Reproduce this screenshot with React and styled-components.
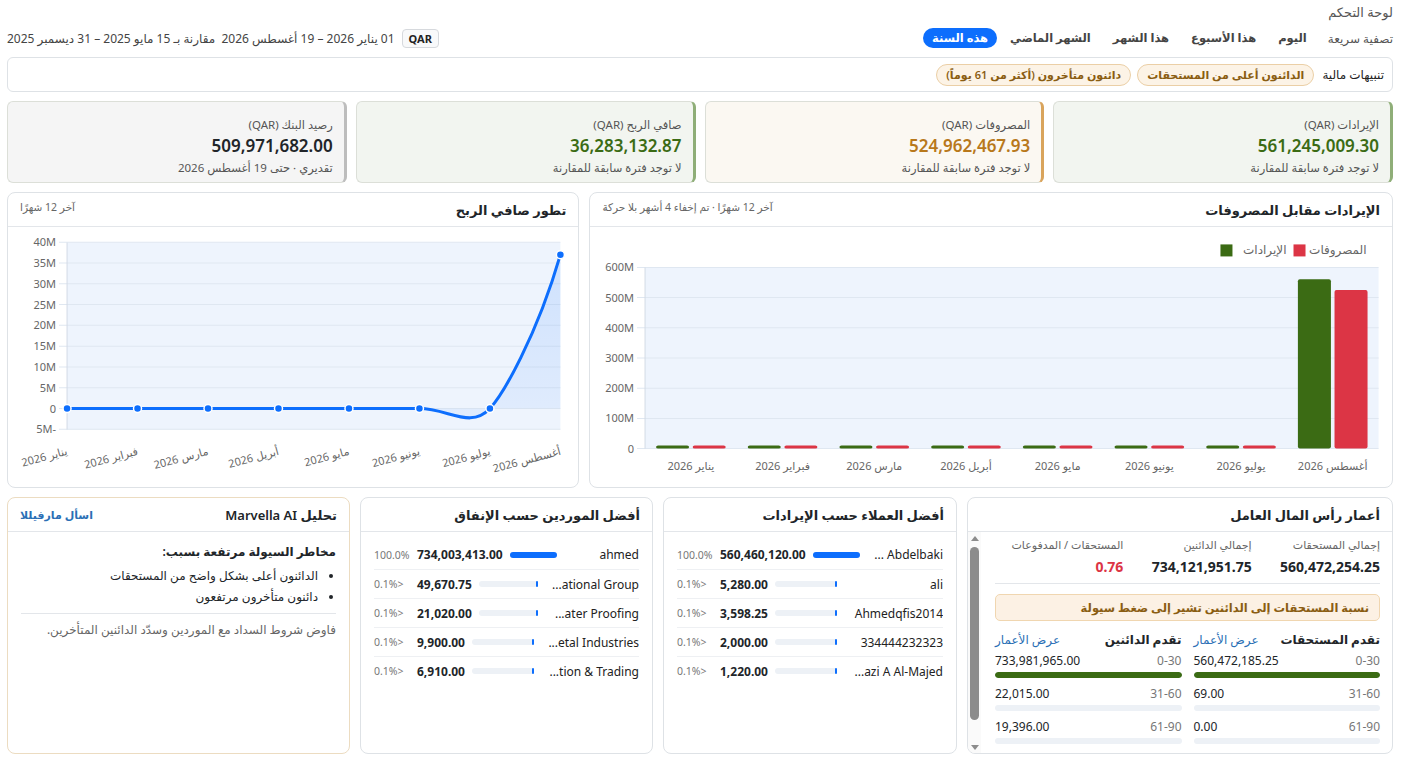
import React from 'react'
import styled, { createGlobalStyle } from 'styled-components'

const GlobalStyle = createGlobalStyle`
  * { box-sizing: border-box; }
  body {
    margin: 0;
    background: #fff;
    color: #212529;
    font-family: 'Noto Sans', 'DejaVu Sans', sans-serif;
  }
`

const Page = styled.div`
  direction: rtl;
  height: 758px;
  overflow: hidden;
  padding: 3px 10px 0 7px;
`

const PageTitle = styled.div`
  font-size: 13px;
  line-height: 18px;
  color: #555;
`

const Toolbar = styled.div`
  margin-top: 5px;
  height: 24px;
  display: flex;
  align-items: center;
  justify-content: space-between;
`

const QuickFilters = styled.div`
  display: flex;
  align-items: center;
  gap: 4px;
`

const FilterLabel = styled.span`
  font-size: 12px;
  color: #555;
  margin-left: 8px;
`

const Tab = styled.span`
  font-size: 11.5px;
  font-weight: 600;
  line-height: 16px;
  padding: 2px 9px;
  border-radius: 11px;
  color: ${p => (p.$active ? '#fff' : '#444')};
  background: ${p => (p.$active ? '#0d6efd' : 'transparent')};
`

const RangeInfo = styled.div`
  display: flex;
  align-items: center;
  gap: 7px;
  font-size: 12px;
  color: #444;
`

const CurrencyBadge = styled.span`
  font-size: 11px;
  font-weight: 700;
  color: #222;
  padding: 1px 6px;
  border: 1px solid #d6d9dd;
  border-radius: 4px;
  background: #f8f9fa;
`

const AlertsBar = styled.div`
  margin-top: 7px;
  height: 35px;
  border: 1px solid #dee2e6;
  border-radius: 6px;
  display: flex;
  align-items: center;
  gap: 6px;
  padding: 0 8px;
`

const AlertsTitle = styled.span`
  font-size: 12px;
  color: #222;
  margin-left: 2px;
`

const AlertPill = styled.span`
  font-size: 11px;
  font-weight: 600;
  line-height: 20px;
  padding: 0 9px;
  border-radius: 11px;
  color: #8a5d12;
  background: #fcf3e6;
  border: 1px solid #ebcfa6;
`

const KpiGrid = styled.div`
  margin-top: 9px;
  display: grid;
  grid-template-columns: repeat(4, 1fr);
  gap: 9px;
`

const Kpi = styled.div`
  height: 82px;
  padding: 14px 11px 0;
  background: ${p => p.$bg};
  border: 1px solid #dcdfd8;
  border-right: 3px solid ${p => p.$accent};
  border-radius: 6px;
`

const KpiLabel = styled.div`
  font-size: 11.5px;
  line-height: 18px;
  color: #555;
`

const KpiValue = styled.div`
  font-size: 17px;
  font-weight: 600;
  line-height: 24px;
  color: ${p => p.$color};
`

const KpiNote = styled.div`
  margin-top: 1px;
  font-size: 11.5px;
  line-height: 18px;
  color: #555;
`

const ChartsGrid = styled.div`
  margin-top: 9px;
  display: grid;
  grid-template-columns: 803fr 572fr;
  gap: 10px;
  height: 296px;
`

const Card = styled.div`
  display: flex;
  flex-direction: column;
  min-width: 0;
  background: #fff;
  border: 1px solid ${p => p.$border || '#dee2e6'};
  border-radius: 8px;
  overflow: hidden;
`

const CardHeader = styled.div`
  height: 34px;
  flex: none;
  display: flex;
  align-items: center;
  justify-content: space-between;
  padding: 0 12px;
  border-bottom: 1px solid #e3e6ea;
`

const CardTitle = styled.span`
  font-size: 13px;
  font-weight: 600;
  color: #212529;
`

const CardHint = styled.span`
  font-size: 10.5px;
  color: #666;
  align-self: flex-start;
  margin-top: 7px;
`

const AskLink = styled.span`
  font-size: 11px;
  font-weight: 600;
  color: #2a6fb5;
`

const ChartBody = styled.div`
  flex: 1;
  min-height: 0;
  svg {
    display: block;
    width: 100%;
    height: 100%;
  }
`

const BottomGrid = styled.div`
  margin-top: 9px;
  display: grid;
  grid-template-columns: 426fr 294fr 293fr 343fr;
  gap: 10px;
  height: 257px;
`

const PanelBody = styled.div`
  flex: 1;
  min-height: 0;
  display: flex;
`

const PanelContent = styled.div`
  flex: 1;
  min-width: 0;
  overflow: hidden;
  padding: 5px 12px 0 14px;
`

const ScrollRail = styled.div`
  width: 13px;
  flex: none;
  display: flex;
  flex-direction: column;
  align-items: center;
  padding: 4px 0 3px;
  background: #fafafa;
`

const RailArrow = styled.div`
  width: 0;
  height: 0;
  border-left: 4px solid transparent;
  border-right: 4px solid transparent;
  ${p => (p.$down ? 'border-top' : 'border-bottom')}: 5px solid #8c8c8c;
  margin-top: ${p => (p.$down ? 'auto' : '0')};
`

const RailThumb = styled.div`
  margin-top: 6px;
  width: 9px;
  height: 173px;
  border-radius: 5px;
  background: #8c8c8c;
`

const Totals = styled.div`
  display: grid;
  grid-template-columns: repeat(3, 1fr);
  padding-bottom: 6px;
  border-bottom: 1px solid #e3e6ea;
`

const TotalLabel = styled.div`
  font-size: 11px;
  line-height: 16px;
  color: #666;
`

const TotalValue = styled.div`
  margin-top: 4px;
  font-size: 14px;
  font-weight: 700;
  line-height: 20px;
  color: ${p => p.$color || '#212529'};
`

const Warning = styled.div`
  margin-top: 10px;
  height: 27px;
  display: flex;
  align-items: center;
  padding: 0 10px;
  font-size: 11.5px;
  font-weight: 600;
  color: #8a5d12;
  background: #fcf1e4;
  border: 1px solid #f0d6b0;
  border-radius: 5px;
`

const AgingGrid = styled.div`
  margin-top: 12px;
  display: grid;
  grid-template-columns: 1fr 1fr;
  gap: 12px;
`

const AgingHead = styled.div`
  display: flex;
  justify-content: space-between;
  line-height: 14px;
  font-size: 12px;
`

const AgingTitle = styled.span`
  font-weight: 600;
  color: #212529;
`

const AgingLink = styled.span`
  color: #2a6fb5;
`

const AgingRow = styled.div`
  margin-top: ${p => (p.$first ? 6 : 8)}px;
  display: flex;
  justify-content: space-between;
  font-size: 12px;
  line-height: 16px;
`

const Bucket = styled.span`
  color: #777;
`

const Amount = styled.span`
  color: #212529;
`

const Track = styled.div`
  margin-top: 3px;
  height: 6px;
  border-radius: 3px;
  background: #edf1f6;
  display: flex;
  overflow: hidden;
`

const Fill = styled.div`
  height: 100%;
  border-radius: 3px;
  background: ${p => p.$color};
`

const RankBody = styled.div`
  padding: 8px 13px;
`

const RankRow = styled.div`
  height: 29px;
  display: flex;
  align-items: center;
  gap: 7px;
  & + & { border-top: 1px solid #eef0f3; }
`

const RankName = styled.div`
  flex: 1.6 1 0;
  min-width: 0;
  overflow: hidden;
  white-space: nowrap;
  font-size: 12px;
  color: #222;
`

const RankBar = styled.div`
  flex: 1 1 0;
  min-width: 0;
  height: 6px;
  border-radius: 3px;
  background: #edf1f6;
  display: flex;
`

const RankAmount = styled.span`
  font-size: 12px;
  font-weight: 700;
  color: #212529;
`

const RankPct = styled.span`
  width: 36px;
  flex: none;
  text-align: left;
  font-size: 10.5px;
  color: #777;
`

const AiBody = styled.div`
  padding: 10px 13px;
`

const AiLead = styled.div`
  font-size: 12px;
  font-weight: 600;
  line-height: 20px;
  color: #212529;
`

const AiList = styled.ul`
  margin: 3px 0 0;
  padding: 0 18px 6px 0;
  font-size: 12px;
  line-height: 21px;
  color: #212529;
  border-bottom: 1px solid #e3e6ea;
`

const AiNote = styled.div`
  margin-top: 7px;
  font-size: 12px;
  line-height: 18px;
  color: #666;
`

const months = ['يناير 2026', 'فبراير 2026', 'مارس 2026', 'أبريل 2026', 'مايو 2026', 'يونيو 2026', 'يوليو 2026', 'أغسطس 2026']

const RevenueExpenseChart = () => {
  const left = 55
  const right = 788
  const top = 40
  const zero = 221
  const step = (right - left) / 8
  const scale = (zero - top) / 600
  const revenue = [0, 0, 0, 0, 0, 0, 0, 561]
  const expenses = [0, 0, 0, 0, 0, 0, 0, 525]
  const barH = v => Math.max(v * scale, 3)
  return (
    <svg viewBox="0 0 801 259" direction="rtl" fontSize="11">
      <rect x="703" y="17" width="12" height="12" fill="#dc3545" />
      <text x="776" y="27" textAnchor="start" fill="#666" fontSize="12">المصروفات</text>
      <rect x="630" y="17" width="12" height="12" fill="#3b6b14" />
      <text x="696" y="27" textAnchor="start" fill="#666" fontSize="12">الإيرادات</text>
      <rect x={left} y={top} width={right - left} height={zero - top} fill="#eef4fd" />
      {[0, 100, 200, 300, 400, 500, 600].map(v => {
        const y = zero - v * scale
        return (
          <g key={v}>
            <line x1={left - 8} x2={right} y1={y} y2={y} stroke="#dfe7f1" />
            <text x="44" y={y + 4} textAnchor="start" fill="#666">{v === 0 ? '0' : `${v}M`}</text>
          </g>
        )
      })}
      <line x1={left} x2={left} y1={top} y2={zero} stroke="#d3dbe6" />
      {months.map((m, i) => {
        const c = left + step * (i + 0.5)
        return (
          <g key={m}>
            <rect x={c - 34.8} y={zero - barH(revenue[i])} width="33" height={barH(revenue[i])} rx="2" fill="#3b6b14" />
            <rect x={c + 1.8} y={zero - barH(expenses[i])} width="33" height={barH(expenses[i])} rx="2" fill="#dc3545" />
            <text x={c} y="242" textAnchor="middle" fill="#666">{m}</text>
          </g>
        )
      })}
    </svg>
  )
}

const NetProfitChart = () => {
  const left = 59
  const right = 552
  const top = 15
  const bottom = 202
  const zero = 181
  const perM = (bottom - top) / 45
  const xs = months.map((_, i) => left + (i * (right - left)) / 7)
  const ys = [0, 0, 0, 0, 0, 0, 0, 37].map(v => zero - v * perM)
  const curve = `M${xs[0]} ${zero} L${xs[5]} ${zero} C440 181 462 202 ${xs[6]} ${zero} C494 167.7 528 110 ${xs[7]} ${ys[7]}`
  return (
    <svg viewBox="0 0 570 259" direction="rtl" fontSize="11">
      <defs>
        <linearGradient id="profitFill" x1="0" y1="0" x2="0" y2="1">
          <stop offset="0" stopColor="#0d6efd" stopOpacity="0.14" />
          <stop offset="1" stopColor="#0d6efd" stopOpacity="0.06" />
        </linearGradient>
      </defs>
      <rect x={left} y={top} width={right - left} height={bottom - top} fill="#eef4fd" />
      {[40, 35, 30, 25, 20, 15, 10, 5, 0, -5].map(v => {
        const y = zero - v * perM
        return (
          <g key={v}>
            <line x1={left - 8} x2={right} y1={y} y2={y} stroke="#dfe7f1" />
            <text x="48" y={y + 4} textAnchor="start" fill="#666">{v === 0 ? '0' : `${v}M`}</text>
          </g>
        )
      })}
      <line x1={left} x2={left} y1={top} y2={bottom} stroke="#d3dbe6" />
      <path d={`${curve} L${right} ${zero} L${left} ${zero} Z`} fill="url(#profitFill)" />
      <path d={curve} fill="none" stroke="#0d6efd" strokeWidth="3" />
      {xs.map((x, i) => (
        <circle key={i} cx={x} cy={ys[i]} r="4" fill="#0d6efd" stroke="#fff" strokeWidth="1.5" />
      ))}
      {months.map((m, i) => (
        <text key={m} x={xs[i] + 1} y="227" textAnchor="start" fill="#666" transform={`rotate(-15 ${xs[i] + 1} 227)`}>{m}</text>
      ))}
    </svg>
  )
}

const customers = [
  { name: '... Abdelbaki', amount: '560,460,120.00', pct: '100.0%', share: 100 },
  { name: 'ali', amount: '5,280.00', pct: '<0.1%', share: 0 },
  { name: 'Ahmedqfis2014', amount: '3,598.25', pct: '<0.1%', share: 0 },
  { name: '334444232323', amount: '2,000.00', pct: '<0.1%', share: 0 },
  { name: '...azi A Al-Majed', amount: '1,220.00', pct: '<0.1%', share: 0 },
]

const suppliers = [
  { name: 'ahmed', amount: '734,003,413.00', pct: '100.0%', share: 100 },
  { name: '...ational Group', amount: '49,670.75', pct: '<0.1%', share: 0 },
  { name: '...ater Proofing', amount: '21,020.00', pct: '<0.1%', share: 0 },
  { name: '...etal Industries', amount: '9,900.00', pct: '<0.1%', share: 0 },
  { name: '...tion & Trading', amount: '6,910.00', pct: '<0.1%', share: 0 },
]

const receivables = [
  ['0-30', '560,472,185.25', 100],
  ['31-60', '69.00', 0],
  ['61-90', '0.00', 0],
]

const payables = [
  ['0-30', '733,981,965.00', 100],
  ['31-60', '22,015.00', 0],
  ['61-90', '19,396.00', 0],
]

const RankList = ({ rows }) => (
  <RankBody>
    {rows.map(r => (
      <RankRow key={r.name}>
        <RankName><bdi dir="ltr">{r.name}</bdi></RankName>
        <RankBar>
          <Fill $color="#0d6efd" style={{ width: `${r.share}%`, minWidth: 2 }} />
        </RankBar>
        <RankAmount>{r.amount}</RankAmount>
        <RankPct>{r.pct}</RankPct>
      </RankRow>
    ))}
  </RankBody>
)

const AgingColumn = ({ title, rows }) => (
  <div>
    <AgingHead>
      <AgingTitle>{title}</AgingTitle>
      <AgingLink>عرض الأعمار</AgingLink>
    </AgingHead>
    {rows.map(([bucket, amount, share], i) => (
      <div key={bucket}>
        <AgingRow $first={i === 0}>
          <Bucket>{bucket}</Bucket>
          <Amount>{amount}</Amount>
        </AgingRow>
        <Track>
          <Fill $color="#3b6b14" style={{ width: `${share}%` }} />
        </Track>
      </div>
    ))}
  </div>
)

const App = () => (
  <>
    <GlobalStyle />
    <Page dir="rtl">
      <PageTitle>لوحة التحكم</PageTitle>
      <Toolbar>
        <QuickFilters>
          <FilterLabel>تصفية سريعة</FilterLabel>
          <Tab>اليوم</Tab>
          <Tab>هذا الأسبوع</Tab>
          <Tab>هذا الشهر</Tab>
          <Tab>الشهر الماضي</Tab>
          <Tab $active>هذه السنة</Tab>
        </QuickFilters>
        <RangeInfo>
          <CurrencyBadge>QAR</CurrencyBadge>
          <span>01 يناير 2026 – 19 أغسطس 2026 &nbsp;مقارنة بـ 15 مايو 2025 – 31 ديسمبر 2025</span>
        </RangeInfo>
      </Toolbar>

      <AlertsBar>
        <AlertsTitle>تنبيهات مالية</AlertsTitle>
        <AlertPill>الدائنون أعلى من المستحقات</AlertPill>
        <AlertPill>دائنون متأخرون (أكثر من 61 يوماً)</AlertPill>
      </AlertsBar>

      <KpiGrid>
        <Kpi $bg="#f2f5f0" $accent="#8fae78">
          <KpiLabel>الإيرادات (QAR)</KpiLabel>
          <KpiValue $color="#3b6b14">561,245,009.30</KpiValue>
          <KpiNote>لا توجد فترة سابقة للمقارنة</KpiNote>
        </Kpi>
        <Kpi $bg="#fbf8f2" $accent="#d9a45c">
          <KpiLabel>المصروفات (QAR)</KpiLabel>
          <KpiValue $color="#b8781b">524,962,467.93</KpiValue>
          <KpiNote>لا توجد فترة سابقة للمقارنة</KpiNote>
        </Kpi>
        <Kpi $bg="#f2f5f0" $accent="#8fae78">
          <KpiLabel>صافي الربح (QAR)</KpiLabel>
          <KpiValue $color="#3b6b14">36,283,132.87</KpiValue>
          <KpiNote>لا توجد فترة سابقة للمقارنة</KpiNote>
        </Kpi>
        <Kpi $bg="#f5f5f5" $accent="#bdbdbd">
          <KpiLabel>رصيد البنك (QAR)</KpiLabel>
          <KpiValue $color="#212529">509,971,682.00</KpiValue>
          <KpiNote>تقديري · حتى 19 أغسطس 2026</KpiNote>
        </Kpi>
      </KpiGrid>

      <ChartsGrid>
        <Card>
          <CardHeader>
            <CardTitle>الإيرادات مقابل المصروفات</CardTitle>
            <CardHint>آخر 12 شهرًا · تم إخفاء 4 أشهر بلا حركة</CardHint>
          </CardHeader>
          <ChartBody><RevenueExpenseChart /></ChartBody>
        </Card>
        <Card>
          <CardHeader>
            <CardTitle>تطور صافي الربح</CardTitle>
            <CardHint>آخر 12 شهرًا</CardHint>
          </CardHeader>
          <ChartBody><NetProfitChart /></ChartBody>
        </Card>
      </ChartsGrid>

      <BottomGrid>
        <Card>
          <CardHeader><CardTitle>أعمار رأس المال العامل</CardTitle></CardHeader>
          <PanelBody>
            <PanelContent>
              <Totals>
                <div>
                  <TotalLabel>إجمالي المستحقات</TotalLabel>
                  <TotalValue>560,472,254.25</TotalValue>
                </div>
                <div>
                  <TotalLabel>إجمالي الدائنين</TotalLabel>
                  <TotalValue>734,121,951.75</TotalValue>
                </div>
                <div>
                  <TotalLabel>المستحقات / المدفوعات</TotalLabel>
                  <TotalValue $color="#dc3545">0.76</TotalValue>
                </div>
              </Totals>
              <Warning>نسبة المستحقات إلى الدائنين تشير إلى ضغط سيولة</Warning>
              <AgingGrid>
                <AgingColumn title="تقدم المستحقات" rows={receivables} />
                <AgingColumn title="تقدم الدائنين" rows={payables} />
              </AgingGrid>
            </PanelContent>
            <ScrollRail>
              <RailArrow />
              <RailThumb />
              <RailArrow $down />
            </ScrollRail>
          </PanelBody>
        </Card>

        <Card>
          <CardHeader><CardTitle>أفضل العملاء حسب الإيرادات</CardTitle></CardHeader>
          <RankList rows={customers} />
        </Card>

        <Card>
          <CardHeader><CardTitle>أفضل الموردين حسب الإنفاق</CardTitle></CardHeader>
          <RankList rows={suppliers} />
        </Card>

        <Card $border="#ecdcc1">
          <CardHeader>
            <CardTitle>تحليل Marvella AI</CardTitle>
            <AskLink>اسأل مارفيللا</AskLink>
          </CardHeader>
          <AiBody>
            <AiLead>مخاطر السيولة مرتفعة بسبب:</AiLead>
            <AiList>
              <li>الدائنون أعلى بشكل واضح من المستحقات</li>
              <li>دائنون متأخرون مرتفعون</li>
            </AiList>
            <AiNote>فاوض شروط السداد مع الموردين وسدّد الدائنين المتأخرين.</AiNote>
          </AiBody>
        </Card>
      </BottomGrid>
    </Page>
  </>
)

export default App
